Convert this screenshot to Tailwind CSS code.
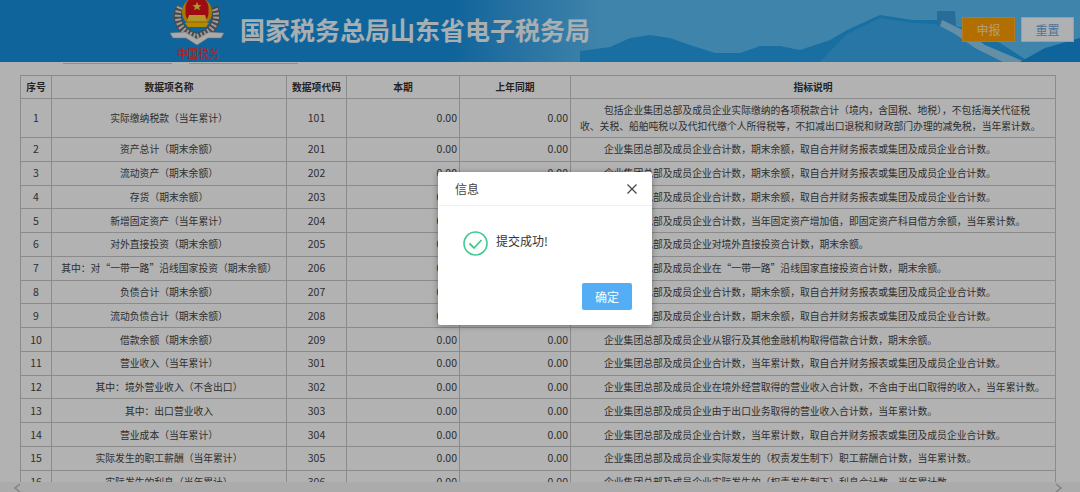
<!DOCTYPE html>
<html>
<head>
    <meta charset="utf-8">
    <title>国家税务总局山东省电子税务局</title>
    <script src="https://cdn.jsdelivr.net/npm/@tailwindcss/browser@4"></script>
</head>
<body class="relative w-[1080px] h-[492px] overflow-hidden bg-white font-['Noto_Sans_CJK_SC','Liberation_Sans',sans-serif]">

    <!-- Header -->
    <div class="relative flex items-start h-[62px] overflow-hidden bg-gradient-to-r from-[#1690df] from-42% to-[#5bbef5] to-56%">
        <svg class="absolute right-0 top-0" width="500" height="62" viewBox="580 0 500 62">
            <path d="M580 51 L610 47 L630 38 L650 35 L670 38 L690 45 L715 53 L740 53 L760 46 L780 46 L800 50 L830 40 L847 30 L880 15 L913 20 L936 20 L970 30 L1000 43 L1030 62 L580 62Z" fill="#25a0e9"/>
            <path d="M820 62 L847 34 L880 18 L913 23 L936 24 L975 40 L1005 62Z" fill="#3aa9ec"/>
            <path d="M937 11 L955 11 L956 26 L937 26Z" fill="#3a9bdc"/>
            <path d="M942 20 L965 31 L985 45 L1025 62 L1003 62 L975 48 L955 34 L940 26Z" fill="#8fcdf0"/>
            <path d="M1020 62 L1045 48 L1080 38 L1080 62Z" fill="#1890e0"/>
        </svg>
        <!-- emblem -->
        <div class="relative ml-[170px] w-[54px] h-[62px] shrink-0">
            <svg class="absolute left-0 top-0" width="54" height="48" viewBox="0 0 54 48">
                <path d="M10 7 C4 20 11 33 27 37 C43 33 50 20 44 7" fill="none" stroke="#666" stroke-width="8"/>
                <path d="M10 7 C4 20 11 33 27 37 C43 33 50 20 44 7" fill="none" stroke="#ddd" stroke-width="6" stroke-dasharray="2 2"/>
                <path d="M0 33 L15 32 L27 39 L39 32 L54 33 L51 38 L38 38 L27 45 L16 38 L3 38Z" fill="#f4f4f4" stroke="#a0a0a0" stroke-width="0.5"/>
                <circle cx="27" cy="12" r="15" fill="#f0ab00"/>
                <path d="M15.5 8 A11.5 11.5 0 0 1 38.5 8 L38.5 14 C38 18 36 20 34 21 H20 C18 20 16 18 15.5 14Z" fill="#e0141c"/>
                <path d="M27 2 l1.3 3 3.2 .2 -2.5 2 .9 3 -2.9-1.7 -2.9 1.7 .9-3 -2.5-2 3.2-.2Z" fill="#ffd83a"/>
                <path d="M19 15 H35 L37 21 H17Z" fill="#ffd83a"/>
                <path d="M15 23 H39 L36 27 H18Z" fill="#ffc400"/>
            </svg>
            <span class="absolute left-[7px] top-[46px] whitespace-nowrap text-[11px] leading-[15px] tracking-[-0.5px] text-[#ff2a30]">中国税务</span>
        </div>
        <h1 class="relative ml-[16px] mt-[12px] text-[25px] leading-[34px] font-bold text-[#f1fbff] whitespace-nowrap">国家税务总局山东省电子税务局</h1>
        <div class="absolute right-[6px] top-[17px] flex gap-[6px]">
            <button class="w-[53px] h-[25px] bg-[#ff9f00] border border-[#ffb030] text-[12px] text-[#ffe0b0]">申报</button>
            <button class="w-[53px] h-[25px] bg-[#fbfdff] border border-[#dde3ea] text-[12px] text-[#6fa5d8]">重置</button>
        </div>
    </div>

    <!-- tab underlines -->
    <div class="flex gap-[17px] pl-[63px] pt-[1px]">
        <div class="w-[109px] h-[1px] bg-[#ccc]"></div>
        <div class="w-[109px] h-[1px] bg-[#ccc]"></div>
    </div>

    <!-- Data table -->
    <div class="h-[418px] overflow-hidden pl-[20px] pt-[11px]">
        <table class="table-fixed border-collapse w-[1036px] text-[9.8px] leading-[16px] text-[#444] border border-[#c8c8c8]">
            <colgroup>
                <col class="w-[31px]"><col class="w-[235px]"><col class="w-[60px]"><col class="w-[113px]"><col class="w-[111px]"><col>
            </colgroup>
            <thead>
                <tr class="h-[23px] font-bold text-[#333]">
                    <th class="border border-[#c8c8c8]">序号</th>
                    <th class="border border-[#c8c8c8]">数据项名称</th>
                    <th class="border border-[#c8c8c8]">数据项代码</th>
                    <th class="border border-[#c8c8c8]">本期</th>
                    <th class="border border-[#c8c8c8]">上年同期</th>
                    <th class="border border-[#c8c8c8]">指标说明</th>
                </tr>
            </thead>
            <tbody class="[&_td]:border [&_td]:border-[#c8c8c8] [&_tr]:h-[23.77px]">
                <tr class="!h-[39px]">
                    <td class="text-center text-[10.5px]">1</td><td class="text-center">实际缴纳税款（当年累计）</td><td class="text-center text-[10.5px]">101</td><td class="text-right pr-[2px] text-[10.5px]">0.00</td><td class="text-right pr-[2px] text-[10.5px]">0.00</td>
                    <td class="pl-[9px] indent-[24px] whitespace-nowrap">包括企业集团总部及成员企业实际缴纳的各项税款合计（境内，含国税、地税），不包括海关代征税<br>收、关税、船舶吨税以及代扣代缴个人所得税等，不扣减出口退税和财政部门办理的减免税，当年累计数。</td>
                </tr>
                <tr><td class="text-center text-[10.5px]">2</td><td class="text-center">资产总计（期末余额）</td><td class="text-center text-[10.5px]">201</td><td class="text-right pr-[2px] text-[10.5px]">0.00</td><td class="text-right pr-[2px] text-[10.5px]">0.00</td><td class="pl-[33px] whitespace-nowrap">企业集团总部及成员企业合计数，期末余额，取自合并财务报表或集团及成员企业合计数。</td></tr>
                <tr><td class="text-center text-[10.5px]">3</td><td class="text-center">流动资产（期末余额）</td><td class="text-center text-[10.5px]">202</td><td class="text-right pr-[2px] text-[10.5px]">0.00</td><td class="text-right pr-[2px] text-[10.5px]">0.00</td><td class="pl-[33px] whitespace-nowrap">企业集团总部及成员企业合计数，期末余额，取自合并财务报表或集团及成员企业合计数。</td></tr>
                <tr><td class="text-center text-[10.5px]">4</td><td class="text-center">存货（期末余额）</td><td class="text-center text-[10.5px]">203</td><td class="text-right pr-[2px] text-[10.5px]">0.00</td><td class="text-right pr-[2px] text-[10.5px]">0.00</td><td class="pl-[33px] whitespace-nowrap">企业集团总部及成员企业合计数，期末余额，取自合并财务报表或集团及成员企业合计数。</td></tr>
                <tr><td class="text-center text-[10.5px]">5</td><td class="text-center">新增固定资产（当年累计）</td><td class="text-center text-[10.5px]">204</td><td class="text-right pr-[2px] text-[10.5px]">0.00</td><td class="text-right pr-[2px] text-[10.5px]">0.00</td><td class="pl-[33px] whitespace-nowrap">企业集团总部及成员企业合计数，当年固定资产增加值，即固定资产科目借方余额，当年累计数。</td></tr>
                <tr><td class="text-center text-[10.5px]">6</td><td class="text-center">对外直接投资（期末余额）</td><td class="text-center text-[10.5px]">205</td><td class="text-right pr-[2px] text-[10.5px]">0.00</td><td class="text-right pr-[2px] text-[10.5px]">0.00</td><td class="pl-[33px] whitespace-nowrap">企业集团总部及成员企业对境外直接投资合计数，期末余额。</td></tr>
                <tr><td class="text-center text-[10.5px]">7</td><td class="text-center">其中：对“一带一路”沿线国家投资（期末余额）</td><td class="text-center text-[10.5px]">206</td><td class="text-right pr-[2px] text-[10.5px]">0.00</td><td class="text-right pr-[2px] text-[10.5px]">0.00</td><td class="pl-[33px] whitespace-nowrap">企业集团总部及成员企业在“一带一路”沿线国家直接投资合计数，期末余额。</td></tr>
                <tr><td class="text-center text-[10.5px]">8</td><td class="text-center">负债合计（期末余额）</td><td class="text-center text-[10.5px]">207</td><td class="text-right pr-[2px] text-[10.5px]">0.00</td><td class="text-right pr-[2px] text-[10.5px]">0.00</td><td class="pl-[33px] whitespace-nowrap">企业集团总部及成员企业合计数，期末余额，取自合并财务报表或集团及成员企业合计数。</td></tr>
                <tr><td class="text-center text-[10.5px]">9</td><td class="text-center">流动负债合计（期末余额）</td><td class="text-center text-[10.5px]">208</td><td class="text-right pr-[2px] text-[10.5px]">0.00</td><td class="text-right pr-[2px] text-[10.5px]">0.00</td><td class="pl-[33px] whitespace-nowrap">企业集团总部及成员企业合计数，期末余额，取自合并财务报表或集团及成员企业合计数。</td></tr>
                <tr><td class="text-center text-[10.5px]">10</td><td class="text-center">借款余额（期末余额）</td><td class="text-center text-[10.5px]">209</td><td class="text-right pr-[2px] text-[10.5px]">0.00</td><td class="text-right pr-[2px] text-[10.5px]">0.00</td><td class="pl-[33px] whitespace-nowrap">企业集团总部及成员企业从银行及其他金融机构取得借款合计数，期末余额。</td></tr>
                <tr><td class="text-center text-[10.5px]">11</td><td class="text-center">营业收入（当年累计）</td><td class="text-center text-[10.5px]">301</td><td class="text-right pr-[2px] text-[10.5px]">0.00</td><td class="text-right pr-[2px] text-[10.5px]">0.00</td><td class="pl-[33px] whitespace-nowrap">企业集团总部及成员企业合计数，当年累计数，取自合并财务报表或集团及成员企业合计数。</td></tr>
                <tr><td class="text-center text-[10.5px]">12</td><td class="text-center">其中：境外营业收入（不含出口）</td><td class="text-center text-[10.5px]">302</td><td class="text-right pr-[2px] text-[10.5px]">0.00</td><td class="text-right pr-[2px] text-[10.5px]">0.00</td><td class="pl-[33px] whitespace-nowrap">企业集团总部及成员企业在境外经营取得的营业收入合计数，不含由于出口取得的收入，当年累计数。</td></tr>
                <tr><td class="text-center text-[10.5px]">13</td><td class="text-center">其中：出口营业收入</td><td class="text-center text-[10.5px]">303</td><td class="text-right pr-[2px] text-[10.5px]">0.00</td><td class="text-right pr-[2px] text-[10.5px]">0.00</td><td class="pl-[33px] whitespace-nowrap">企业集团总部及成员企业由于出口业务取得的营业收入合计数，当年累计数。</td></tr>
                <tr><td class="text-center text-[10.5px]">14</td><td class="text-center">营业成本（当年累计）</td><td class="text-center text-[10.5px]">304</td><td class="text-right pr-[2px] text-[10.5px]">0.00</td><td class="text-right pr-[2px] text-[10.5px]">0.00</td><td class="pl-[33px] whitespace-nowrap">企业集团总部及成员企业合计数，当年累计数，取自合并财务报表或集团及成员企业合计数。</td></tr>
                <tr><td class="text-center text-[10.5px]">15</td><td class="text-center">实际发生的职工薪酬（当年累计）</td><td class="text-center text-[10.5px]">305</td><td class="text-right pr-[2px] text-[10.5px]">0.00</td><td class="text-right pr-[2px] text-[10.5px]">0.00</td><td class="pl-[33px] whitespace-nowrap">企业集团总部及成员企业实际发生的（权责发生制下）职工薪酬合计数，当年累计数。</td></tr>
                <tr><td class="text-center text-[10.5px]">16</td><td class="text-center">实际发生的利息（当年累计）</td><td class="text-center text-[10.5px]">306</td><td class="text-right pr-[2px] text-[10.5px]">0.00</td><td class="text-right pr-[2px] text-[10.5px]">0.00</td><td class="pl-[33px] whitespace-nowrap">企业集团总部及成员企业实际发生的（权责发生制下）利息合计数，当年累计数。</td></tr>
            </tbody>
        </table>
    </div>

    <!-- horizontal scrollbar -->
    <div class="flex items-center justify-between h-[11px] pl-[13px] pr-[17px] bg-[#f5f5f5] text-[#bbb]">
        <svg width="8" height="10" viewBox="0 0 8 10"><path d="M7 1 L2 5 L7 9" fill="none" stroke="currentColor" stroke-width="1.5"/></svg>
        <svg width="8" height="10" viewBox="0 0 8 10"><path d="M1 1 L6 5 L1 9" fill="none" stroke="currentColor" stroke-width="1.5"/></svg>
    </div>

    <!-- overlay -->
    <div class="absolute inset-0 bg-black/30"></div>

    <!-- dialog -->
    <div class="absolute left-[438px] top-[172px] w-[214px] h-[153px] flex flex-col bg-white rounded-[2px] shadow-[0_1px_6px_rgba(0,0,0,0.35)]">
        <div class="flex items-center justify-between h-[34px] pl-[17px] pr-[14px] border-b border-[#f0f0f0]">
            <span class="text-[12px] text-[#444]">信息</span>
            <svg width="12" height="12" viewBox="0 0 12 12"><path d="M1.5 1.5 L10.5 10.5 M10.5 1.5 L1.5 10.5" stroke="#444" stroke-width="1.2"/></svg>
        </div>
        <div class="flex items-start gap-[8px] pl-[25px] pt-[25px]">
            <svg width="25" height="25" viewBox="0 0 25 25"><circle cx="12.5" cy="12.5" r="11.5" fill="none" stroke="#3ecb8f" stroke-width="1.6"/><path d="M6.5 12.5 L11 17 L18.5 9" fill="none" stroke="#3ecb8f" stroke-width="1.8"/></svg>
            <span class="text-[12px] leading-[20px] text-[#333]">提交成功!</span>
        </div>
        <div class="mt-auto flex justify-end pr-[20px] pb-[15px]">
            <button class="w-[50px] h-[27px] rounded-[2px] bg-[#53aef5] text-[12px] text-white">确定</button>
        </div>
    </div>
</body>
</html>
